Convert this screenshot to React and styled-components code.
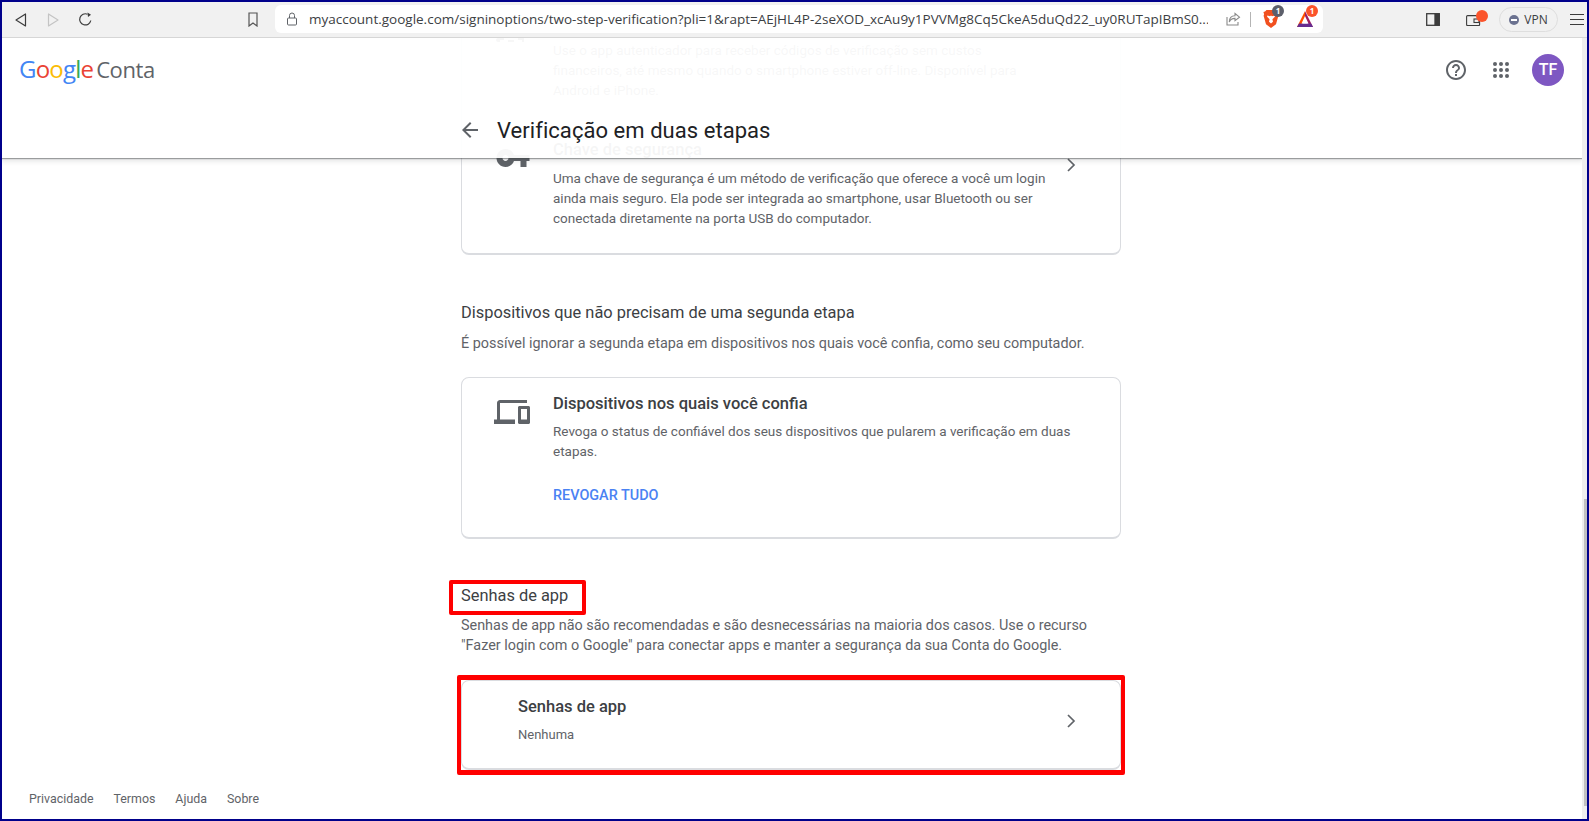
import React from 'react';
import styled, { createGlobalStyle } from 'styled-components';

const GlobalStyle = createGlobalStyle`
  html, body { margin: 0; padding: 0; height: 100%; overflow: hidden; background: #fff; }
  body { font-family: Roboto, "Liberation Sans", sans-serif; }
  #root { height: 100%; }
`;

const Frame = styled.div`
  box-sizing: border-box;
  height: 821px;
  border: 2px solid #00008b;
  display: flex;
  flex-direction: column;
  overflow: hidden;
`;

/* browser chrome */
const Toolbar = styled.div`
  flex: none;
  box-sizing: border-box;
  height: 36px;
  background: #f1f1f1;
  border-bottom: 1px solid #d6d6d6;
  display: flex;
  align-items: center;
  padding-left: 13px;
`;

const Tool = styled.span`
  display: inline-flex;
  flex: none;
  align-items: center;
  justify-content: center;
  margin-left: ${p => p.$ml || 0}px;
  position: relative;
`;

const UrlBar = styled.div`
  width: 1048px;
  height: 28px;
  margin-left: 16px;
  margin-top: -1px;
  background: #fff;
  border-radius: 6px;
  display: flex;
  align-items: center;
  flex: none;
  padding-left: 11px;
  box-sizing: border-box;
`;

const UrlText = styled.span`
  font-family: "Open Sans", sans-serif;
  font-size: 13.5px;
  color: #3c4043;
  width: 899px;
  margin-left: 11px;
  white-space: nowrap;
  overflow: hidden;
  flex: none;
`;

const Divider = styled.span`
  width: 1px;
  height: 15px;
  background: #b4b4b4;
  margin-left: 9px;
  flex: none;
`;

const CountBadge = styled.span`
  position: absolute;
  top: ${p => p.$top}px;
  left: ${p => p.$left}px;
  width: 12px;
  height: 12px;
  border-radius: 50%;
  background: ${p => p.$bg};
  color: #fff;
  font: 700 8px/12px "Open Sans", sans-serif;
  text-align: center;
`;

const WalletDot = styled.span`
  position: absolute;
  top: -3px;
  left: 10px;
  width: 12px;
  height: 12px;
  border-radius: 50%;
  background: #fb542b;
`;

const VpnPill = styled.div`
  box-sizing: border-box;
  flex: none;
  width: 59px;
  height: 25px;
  margin-left: 18px;
  border: 1px solid #dedede;
  border-radius: 13px;
  display: flex;
  align-items: center;
  justify-content: center;
  gap: 5px;
  font: 400 12px "Open Sans", sans-serif;
  color: #3c4043;
`;

const VpnDot = styled.span`
  width: 10px;
  height: 10px;
  border-radius: 50%;
  background: #6b7290;
  display: flex;
  align-items: center;
  justify-content: center;
  &::after { content: ""; width: 6px; height: 2px; background: #fff; }
`;

const Burger = styled.span`
  width: 14px;
  height: 11px;
  margin-left: 12px;
  flex: none;
  border-top: 1px solid #3c3c3c;
  border-bottom: 1px solid #3c3c3c;
  box-sizing: border-box;
  position: relative;
  &::after { content: ""; position: absolute; left: 0; right: 0; top: 3.5px; height: 1px; background: #3c3c3c; }
`;

/* page */
const Viewport = styled.div`
  flex: 1;
  min-height: 0;
  display: flex;
`;

const PageArea = styled.div`
  position: relative;
  flex: 1;
  display: grid;
  grid-template-columns: 459px 660px 1fr;
  overflow: hidden;
  background: #fff;
`;

const ScrollTrack = styled.div`
  width: 5px;
  flex: none;
  background: #eeeeee;
`;

const ScrollThumb = styled.div`
  width: 3px;
  height: 307px;
  margin: 461px 0 0 2px;
  background: #c1c1c1;
`;

const TopBar = styled.header`
  position: absolute;
  top: 0;
  left: 0;
  right: 0;
  height: 120px;
  background: rgba(255, 255, 255, 0.95);
  box-shadow: 0 1px 1px rgba(60, 64, 67, 0.45), 0 2px 5px 1px rgba(60, 64, 67, 0.15);
  z-index: 2;
`;

const TopRow = styled.div`
  height: 64px;
  display: flex;
  align-items: center;
  padding: 0 18px 0 17px;
`;

const Logo = styled.div`
  display: flex;
  align-items: baseline;
  font-family: "Open Sans", sans-serif;
  font-size: 24px;
  letter-spacing: -0.8px;
  flex: 1;
  margin-top: -4px;
`;

const LogoLetter = styled.span`
  color: ${p => p.$c};
`;

const LogoProduct = styled.span`
  color: #5f6368;
  font-family: "Open Sans", sans-serif;
  font-size: 22px;
  letter-spacing: -0.4px;
  margin-left: 3px;
`;

const Avatar = styled.div`
  width: 32px;
  height: 32px;
  border-radius: 50%;
  background: #7e57c2;
  color: #fff;
  font: 500 16px/32px Roboto, sans-serif;
  text-align: center;
  margin-left: 19px;
`;

const HeadIcon = styled.span`
  display: inline-flex;
  margin-left: ${p => p.$ml || 0}px;
`;

const TitleRow = styled.div`
  display: flex;
  align-items: center;
  height: 56px;
  padding-left: 456px;
`;

const PageTitle = styled.h1`
  margin: 0 0 0 15px;
  font: 400 22px Roboto, sans-serif;
  letter-spacing: 0.05px;
  color: #202124;
`;

const SideCol = styled.div`
  display: flex;
  align-items: flex-end;
`;

const FooterLinks = styled.nav`
  display: flex;
  gap: 20px;
  padding: 0 0 12px 27px;
  font-size: 12.4px;
  line-height: 16px;
  color: #5f6368;
`;

const MainCol = styled.main`
  min-width: 0;
`;

const Card = styled.section`
  position: relative;
  box-sizing: border-box;
  background: #fff;
  border: 1px solid #dadce0;
  border-bottom-width: 2px;
  border-radius: 8px;
`;

const ScrolledCard = styled(Card)`
  margin-top: -20px;
  height: 237px;
  padding: 21px 0 0 91px;
`;

const TrustedCard = styled(Card)`
  height: 162px;
  margin-top: 23px;
  padding: 15px 24px 0 91px;
`;

const CardIcon = styled.span`
  position: absolute;
  left: ${p => p.$left || 32}px;
  top: ${p => p.$top}px;
  display: inline-flex;
`;

const Chevron = styled.span`
  position: absolute;
  left: 604px;
  top: ${p => p.$top}px;
  display: inline-flex;
`;

const CardTitle = styled.h3`
  margin: ${p => p.$mt || 0}px 0 0;
  font: 500 16.5px/22px Roboto, sans-serif;
  color: #3c4043;
`;

const CardText = styled.p`
  margin: ${p => p.$mt || 0}px 0 0;
  font-size: 13.5px;
  line-height: 20px;
  color: #5f6368;
  width: ${p => p.$w || 522}px;
`;

const ActionLink = styled.a`
  display: block;
  margin-top: 25px;
  font: 500 14.4px/20px Roboto, sans-serif;
  color: #4a82f3;
`;

const SectionHead = styled.h2`
  position: relative;
  width: max-content;
  margin: ${p => p.$mt}px 0 0;
  font: 400 16.4px/22px Roboto, sans-serif;
  color: #3c4043;
  ${p => p.$marked && `
    &::after {
      content: "";
      position: absolute;
      left: -12px;
      right: -18px;
      top: -5px;
      bottom: -8px;
      border: 4px solid #f00;
      border-radius: 2px;
    }
  `}
`;

const SectionText = styled.p`
  margin: ${p => p.$mt || 0}px 0 0;
  font-size: 14.4px;
  line-height: 20px;
  color: #5f6368;
  max-width: 640px;
`;

const MarkedFrame = styled.div`
  margin: 19px -4px 0;
  border: solid #f00;
  border-width: 5px 4px;
  border-radius: 2px;
`;

const AppCard = styled(Card)`
  height: 90px;
  padding: 15px 0 0 56px;
`;

const SmallText = styled.p`
  margin: 8px 0 0;
  font-size: 13px;
  line-height: 18px;
  color: #5f6368;
`;

const ChevronIcon = () => (
  <svg width="10" height="14" viewBox="0 0 10 14" fill="none" stroke="#5f6368" strokeWidth="1.7">
    <polyline points="2,1 8,7 2,13" />
  </svg>
);

const BraveIcon = () => (
  <svg width="16" height="20" viewBox="0 0 16 20">
    <path d="M3.500 1h9l1.500 1.600 1.600.3-.7 2.400.5 1.500-2.400 8.500L8 19l-5-3.700L.6 6.800l.5-1.500L.4 2.900 2 2.600z" fill="#f1501f" />
    <path d="M4.300 6.500 7 7.200 8 6.600l1 .6 2.700-.7.2 1.300-2.500 2.500.6 2.400L8 14.500l-2-1.800.6-2.400-2.500-2.500z" fill="#fff" />
  </svg>
);

const BatIcon = () => (
  <svg width="18" height="18" viewBox="0 0 18 18">
    <polygon points="9,1 17,17 13.500,17 9,8" fill="#9e1f63" />
    <polygon points="9,1 1,17 5,17 9,8" fill="#ff5000" />
    <polygon points="1,17 17,17 15,13.500 3,13.500" fill="#662d91" />
    <polygon points="9,6 12.500,13.500 5.500,13.500" fill="#fff" />
  </svg>
);

const LOGO = [['G', '#4285f4'], ['o', '#ea4335'], ['o', '#fbbc05'], ['g', '#4285f4'], ['l', '#34a853'], ['e', '#ea4335']];

const App = () => (
  <>
    <GlobalStyle />
    <Frame>
      <Toolbar>
        <Tool>
          <svg width="12" height="14" viewBox="0 0 12 14" fill="none" stroke="#3c3c3c" strokeWidth="1.2"><path d="M10.500 1v12L1 7z" strokeLinejoin="round" /></svg>
        </Tool>
        <Tool $ml={20}>
          <svg width="12" height="14" viewBox="0 0 12 14" fill="none" stroke="#c4c4c4" strokeWidth="1.2"><path d="M1.500 1v12L11 7z" strokeLinejoin="round" /></svg>
        </Tool>
        <Tool $ml={19}>
          <svg width="15" height="15" viewBox="0 0 15 15" fill="none" stroke="#3c3c3c" strokeWidth="1.2"><path d="M12.800 8.500A5.600 5.600 0 1 1 9.500 2.200" /><path d="M9.500 .5l3.500 2.200-3 2.300z" fill="#3c3c3c" stroke="none" /></svg>
        </Tool>
        <Tool $ml={154}>
          <svg width="12" height="15" viewBox="0 0 12 15" fill="none" stroke="#555" strokeWidth="1.2"><path d="M2 1h8v13L6 11 2 14z" /></svg>
        </Tool>
        <UrlBar>
          <svg width="12" height="14" viewBox="0 0 12 14" fill="none" stroke="#5f6368" strokeWidth="1"><rect x="1.500" y="6" width="9" height="7" rx="1" /><path d="M3.500 6V3.500a2.500 2.500 0 0 1 5 0V6" /></svg>
          <UrlText>myaccount.google.com/signinoptions/two-step-verification?pli=1&amp;rapt=AEjHL4P-2seXOD_xcAu9y1PVVMg8Cq5CkeA5duQd22_uy0RUTapIBmS0...</UrlText>
          <Tool $ml={18}>
            <svg width="15" height="14" viewBox="0 0 15 14" fill="none" stroke="#8a8a8a" strokeWidth="1.1"><path d="M9 1.500l4.500 3.700L9 8.700V6.400C6 6.400 4.200 7.700 3.300 10 3.300 6 5.300 3.700 9 3.700z" /><path d="M1 5v8h11v-3" /></svg>
          </Tool>
          <Divider />
          <Tool $ml={12}>
            <BraveIcon />
            <CountBadge $top={-4} $left={9} $bg="#5c5f6b">1</CountBadge>
          </Tool>
          <Tool $ml={17}>
            <BatIcon />
            <CountBadge $top={-5} $left={10} $bg="#fb542b">1</CountBadge>
          </Tool>
        </UrlBar>
        <Tool $ml={103}>
          <svg width="14" height="13" viewBox="0 0 14 13" fill="none" stroke="#3c3c3c" strokeWidth="1.3"><rect x=".7" y=".7" width="12.600" height="11.600" /><rect x="9" y="1" width="4" height="11" fill="#3c3c3c" /></svg>
        </Tool>
        <Tool $ml={26}>
          <svg width="15" height="13" viewBox="0 0 15 13" fill="none" stroke="#3c3c3c" strokeWidth="1.1"><rect x=".6" y="2.600" width="13" height="10" rx="1" /><rect x="8" y="6" width="5" height="3.500" /></svg>
          <WalletDot />
        </Tool>
        <VpnPill><VpnDot />VPN</VpnPill>
        <Burger />
      </Toolbar>

      <Viewport>
        <PageArea>
          <TopBar>
            <TopRow>
              <Logo>
                {LOGO.map(([l, c], i) => <LogoLetter key={i} $c={c}>{l}</LogoLetter>)}
                <LogoProduct>Conta</LogoProduct>
              </Logo>
              <HeadIcon>
                <svg width="24" height="24" viewBox="0 0 24 24" fill="#5f6368"><path d="M11 18h2v-2h-2v2zm1-16C6.480 2 2 6.480 2 12s4.480 10 10 10 10-4.480 10-10S17.520 2 12 2zm0 18c-4.410 0-8-3.590-8-8s3.590-8 8-8 8 3.590 8 8-3.590 8-8 8zm0-14c-2.210 0-4 1.790-4 4h2c0-1.100.9-2 2-2s2 .9 2 2c0 2-3 1.750-3 5h2c0-2.250 3-2.500 3-5 0-2.210-1.790-4-4-4z" /></svg>
              </HeadIcon>
              <HeadIcon $ml={21}>
                <svg width="24" height="24" viewBox="0 0 24 24" fill="#5f6368">
                  {[6, 12, 18].flatMap(y => [6, 12, 18].map(x => <circle key={`${x}-${y}`} cx={x} cy={y} r="2" />))}
                </svg>
              </HeadIcon>
              <Avatar>TF</Avatar>
            </TopRow>
            <TitleRow>
              <svg width="24" height="24" viewBox="0 0 24 24" fill="#5f6368"><path d="M20 11H7.830l5.590-5.590L12 4l-8 8 8 8 1.410-1.410L7.830 13H20v-2z" /></svg>
              <PageTitle>Verificação em duas etapas</PageTitle>
            </TitleRow>
          </TopBar>

          <SideCol>
            <FooterLinks>
              <span>Privacidade</span>
              <span>Termos</span>
              <span>Ajuda</span>
              <span>Sobre</span>
            </FooterLinks>
          </SideCol>

          <MainCol>
            <ScrolledCard>
              <CardIcon $top={1} $left={34}>
                <svg width="30" height="24" viewBox="0 0 30 24" fill="#5f6368"><path d="M2 18h6v2H4v2H2a2 2 0 0 1 0-4zM22 18h6v4h-2v-2h-4zM12 20h6v2h-6z" /></svg>
              </CardIcon>
              <CardText $w={475}>
                Use o app autenticador para receber códigos de verificação sem custos financeiros, até mesmo quando o smartphone estiver off-line. Disponível para Android e iPhone.
              </CardText>
              <CardTitle $mt={39}>Chave de segurança</CardTitle>
              <CardText $mt={7}>
                Uma chave de segurança é um método de verificação que oferece a você um login ainda mais seguro. Ela pode ser integrada ao smartphone, usar Bluetooth ou ser conectada diretamente na porta USB do computador.
              </CardText>
              <CardIcon $top={121} $left={33}>
                <svg width="36" height="36" viewBox="0 0 24 24" fill="#5f6368"><path d="M12.650 10C11.830 7.670 9.610 6 7 6c-3.310 0-6 2.690-6 6s2.690 6 6 6c2.610 0 4.830-1.670 5.650-4H17v4h4v-4h2v-4H12.650zM7 14c-1.100 0-2-.9-2-2s.9-2 2-2 2 .9 2 2-.9 2-2 2z" /></svg>
              </CardIcon>
              <Chevron $top={139}><ChevronIcon /></Chevron>
            </ScrolledCard>

            <SectionHead $mt={47}>Dispositivos que não precisam de uma segunda etapa</SectionHead>
            <SectionText $mt={10}>É possível ignorar a segunda etapa em dispositivos nos quais você confia, como seu computador.</SectionText>

            <TrustedCard>
              <CardIcon $top={16}>
                <svg width="36" height="36" viewBox="0 0 24 24" fill="#5f6368"><path d="M4 6h18V4H4c-1.100 0-2 .9-2 2v11H0v3h14v-3H4V6zm19 2h-6c-.55 0-1 .45-1 1v10c0 .55.45 1 1 1h6c.55 0 1-.45 1-1V9c0-.55-.45-1-1-1zm-1 9h-4v-7h4v7z" /></svg>
              </CardIcon>
              <CardTitle>Dispositivos nos quais você confia</CardTitle>
              <CardText $mt={6}>Revoga o status de confiável dos seus dispositivos que pularem a verificação em duas etapas.</CardText>
              <ActionLink>REVOGAR TUDO</ActionLink>
            </TrustedCard>

            <SectionHead $mt={46} $marked>Senhas de app</SectionHead>
            <SectionText $mt={9}>Senhas de app não são recomendadas e são desnecessárias na maioria dos casos. Use o recurso "Fazer login com o Google" para conectar apps e manter a segurança da sua Conta do Google.</SectionText>

            <MarkedFrame>
              <AppCard>
                <CardTitle>Senhas de app</CardTitle>
                <SmallText>Nenhuma</SmallText>
                <Chevron $top={33}><ChevronIcon /></Chevron>
              </AppCard>
            </MarkedFrame>
          </MainCol>
        </PageArea>
        <ScrollTrack><ScrollThumb /></ScrollTrack>
      </Viewport>
    </Frame>
  </>
);

export default App;
